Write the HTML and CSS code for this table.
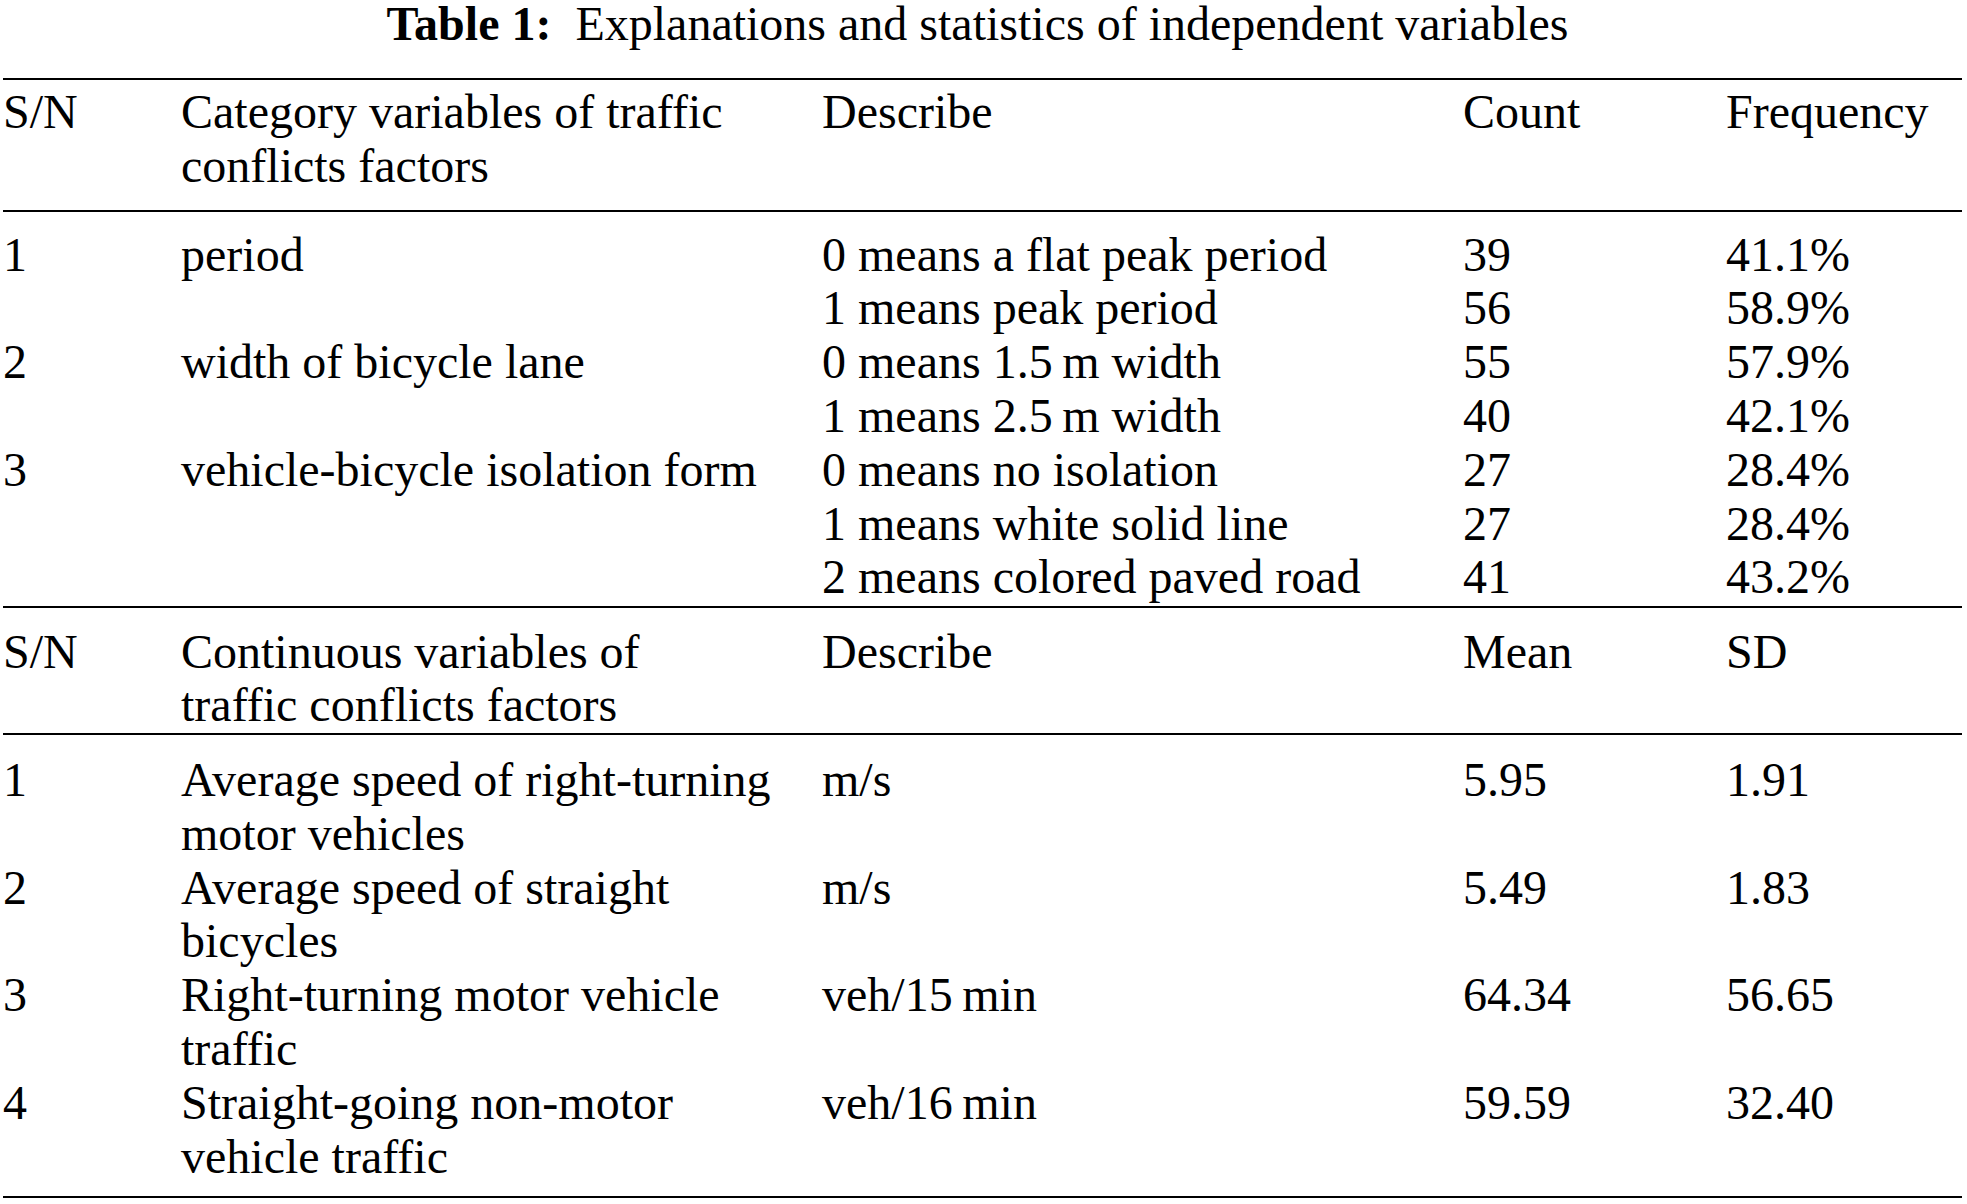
FILE: index.html
```html
<!DOCTYPE html>
<html lang="en">
<head>
<meta charset="utf-8">
<title>Table 1: Explanations and statistics of independent variables</title>
<link rel="stylesheet" href="styles.css">
</head>
<body>
<main class="page">
  <h1 class="caption"><b>Table 1:</b>&nbsp; Explanations and statistics of independent variables</h1>
  <div class="table">
    <div class="group head head-cat">
      <div>S/N</div>
      <div>Category variables of traffic<br>conflicts factors</div>
      <div>Describe</div>
      <div>Count</div>
      <div>Frequency</div>
    </div>
    <div class="group body body-cat">
      <div>1</div><div>period</div><div>0 means a flat peak period</div><div>39</div><div>41.1%</div>
      <div></div><div></div><div>1 means peak period</div><div>56</div><div>58.9%</div>
      <div>2</div><div>width of bicycle lane</div><div>0 means 1.5&#8201;m width</div><div>55</div><div>57.9%</div>
      <div></div><div></div><div>1 means 2.5&#8201;m width</div><div>40</div><div>42.1%</div>
      <div>3</div><div>vehicle-bicycle isolation form</div><div>0 means no isolation</div><div>27</div><div>28.4%</div>
      <div></div><div></div><div>1 means white solid line</div><div>27</div><div>28.4%</div>
      <div></div><div></div><div>2 means colored paved road</div><div>41</div><div>43.2%</div>
    </div>
    <div class="group head head-cont">
      <div>S/N</div>
      <div>Continuous variables of<br>traffic conflicts factors</div>
      <div>Describe</div>
      <div>Mean</div>
      <div>SD</div>
    </div>
    <div class="group body body-cont">
      <div>1</div><div>Average speed of right-turning<br>motor vehicles</div><div>m/s</div><div>5.95</div><div>1.91</div>
      <div>2</div><div>Average speed of straight<br>bicycles</div><div>m/s</div><div>5.49</div><div>1.83</div>
      <div>3</div><div>Right-turning motor vehicle<br>traffic</div><div>veh/15&#8201;min</div><div>64.34</div><div>56.65</div>
      <div>4</div><div>Straight-going non-motor<br>vehicle traffic</div><div>veh/16&#8201;min</div><div>59.59</div><div>32.40</div>
    </div>
  </div>
</main>
</body>
</html>
```

FILE: styles.css
```css
html, body {
  margin: 0;
  padding: 0;
  background: #ffffff;
}

body {
  color: #000000;
  font-family: "Liberation Serif", "Times New Roman", Times, serif;
  font-size: 48px;
}

.page {
  width: 1967px;
}

.caption {
  margin: 0 0 32px;
  padding: 2px 12px 0 0;
  font-size: 48px;
  font-weight: normal;
  line-height: 44px;
  text-align: center;
  white-space: nowrap;
}

.caption b {
  font-weight: bold;
}

.table {
  margin-left: 3px;
  width: 1959px;
  border-top: 2px solid #000000;
  line-height: 53.8px;
}

.group {
  display: grid;
  grid-template-columns: 178px 641px 641px 263px 1fr;
  align-items: start;
  border-bottom: 2px solid #000000;
  white-space: nowrap;
}

.head-cat {
  padding: 4.9px 0 18px;
}

.body-cat {
  padding: 15.2px 0 1.5px;
}

.head-cont {
  padding: 16.9px 0 1px;
}

.body-cont {
  padding: 17.7px 0 13px;
}
```
